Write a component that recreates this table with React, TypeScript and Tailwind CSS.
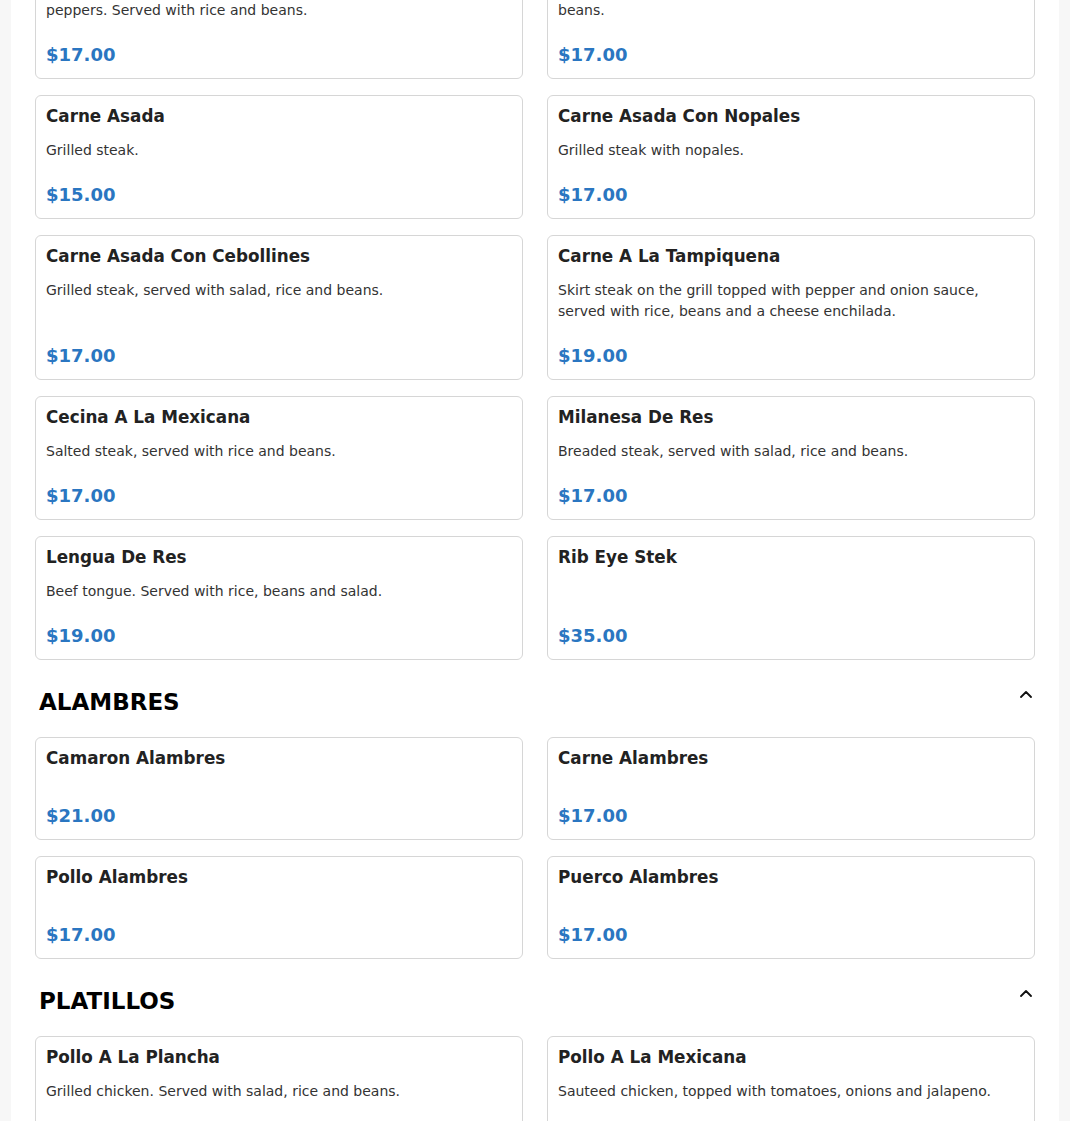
type Item = { name: string; desc?: string; price: string };

type Section = { title?: string; items: Item[] };

const sections: Section[] = [
  {
    items: [
      {
        name: 'Bistec A La Mexicana',
        desc: 'Steak sauteed with tomatoes, onions and jalapeno\npeppers. Served with rice and beans.',
        price: '$17.00',
      },
      {
        name: 'Bistec Ranchero',
        desc: 'Steak cooked in ranchero sauce. Served with rice and\nbeans.',
        price: '$17.00',
      },
      { name: 'Carne Asada', desc: 'Grilled steak.', price: '$15.00' },
      { name: 'Carne Asada Con Nopales', desc: 'Grilled steak with nopales.', price: '$17.00' },
      {
        name: 'Carne Asada Con Cebollines',
        desc: 'Grilled steak, served with salad, rice and beans.',
        price: '$17.00',
      },
      {
        name: 'Carne A La Tampiquena',
        desc: 'Skirt steak on the grill topped with pepper and onion sauce, served with rice, beans and a cheese enchilada.',
        price: '$19.00',
      },
      { name: 'Cecina A La Mexicana', desc: 'Salted steak, served with rice and beans.', price: '$17.00' },
      { name: 'Milanesa De Res', desc: 'Breaded steak, served with salad, rice and beans.', price: '$17.00' },
      { name: 'Lengua De Res', desc: 'Beef tongue. Served with rice, beans and salad.', price: '$19.00' },
      { name: 'Rib Eye Stek', price: '$35.00' },
    ],
  },
  {
    title: 'ALAMBRES',
    items: [
      { name: 'Camaron Alambres', price: '$21.00' },
      { name: 'Carne Alambres', price: '$17.00' },
      { name: 'Pollo Alambres', price: '$17.00' },
      { name: 'Puerco Alambres', price: '$17.00' },
    ],
  },
  {
    title: 'PLATILLOS',
    items: [
      { name: 'Pollo A La Plancha', desc: 'Grilled chicken. Served with salad, rice and beans.', price: '$17.00' },
      {
        name: 'Pollo A La Mexicana',
        desc: 'Sauteed chicken, topped with tomatoes, onions and jalapeno.',
        price: '$17.00',
      },
    ],
  },
];

function Chevron() {
  return (
    <svg width="12" height="7" viewBox="0 0 12 7" fill="none">
      <path d="M1 6 6 1l5 5" stroke="#111" strokeWidth="1.8" strokeLinecap="round" strokeLinejoin="round" />
    </svg>
  );
}

function MenuCard({ item }: { item: Item }) {
  return (
    <div className="flex flex-col rounded-md border border-[#d6d6d6] bg-white p-[10px]">
      <h3 className="text-[16.8px] leading-[20px] font-bold text-[#222]">{item.name}</h3>
      <p className="mt-[14px] mb-5 text-sm leading-[21px] whitespace-pre-line text-[#333]">{item.desc}</p>
      <div className="mt-auto text-lg leading-[27px] font-bold text-[#2a76c1]">{item.price}</div>
    </div>
  );
}

export default function App() {
  return (
    <div className="h-[1121px] overflow-hidden bg-[#f7f7f7] font-['DejaVu_Sans',sans-serif]">
      <div className="mx-auto min-h-full max-w-[1048px] bg-white px-6">
        <div className="-mt-[66px]">
          {sections.map((section, i) => (
            <div key={i}>
              {section.title && (
                <div className="flex items-start justify-between pt-[26px] pr-[3px] pb-[19px] pl-1">
                  <h2 className="text-[23px] leading-8 font-bold text-black">{section.title}</h2>
                  <div className="pt-[5px]">
                    <Chevron />
                  </div>
                </div>
              )}
              <div className="grid grid-cols-2 gap-x-6 gap-y-4">
                {section.items.map((item) => (
                  <MenuCard key={item.name} item={item} />
                ))}
              </div>
            </div>
          ))}
        </div>
      </div>
    </div>
  );
}
